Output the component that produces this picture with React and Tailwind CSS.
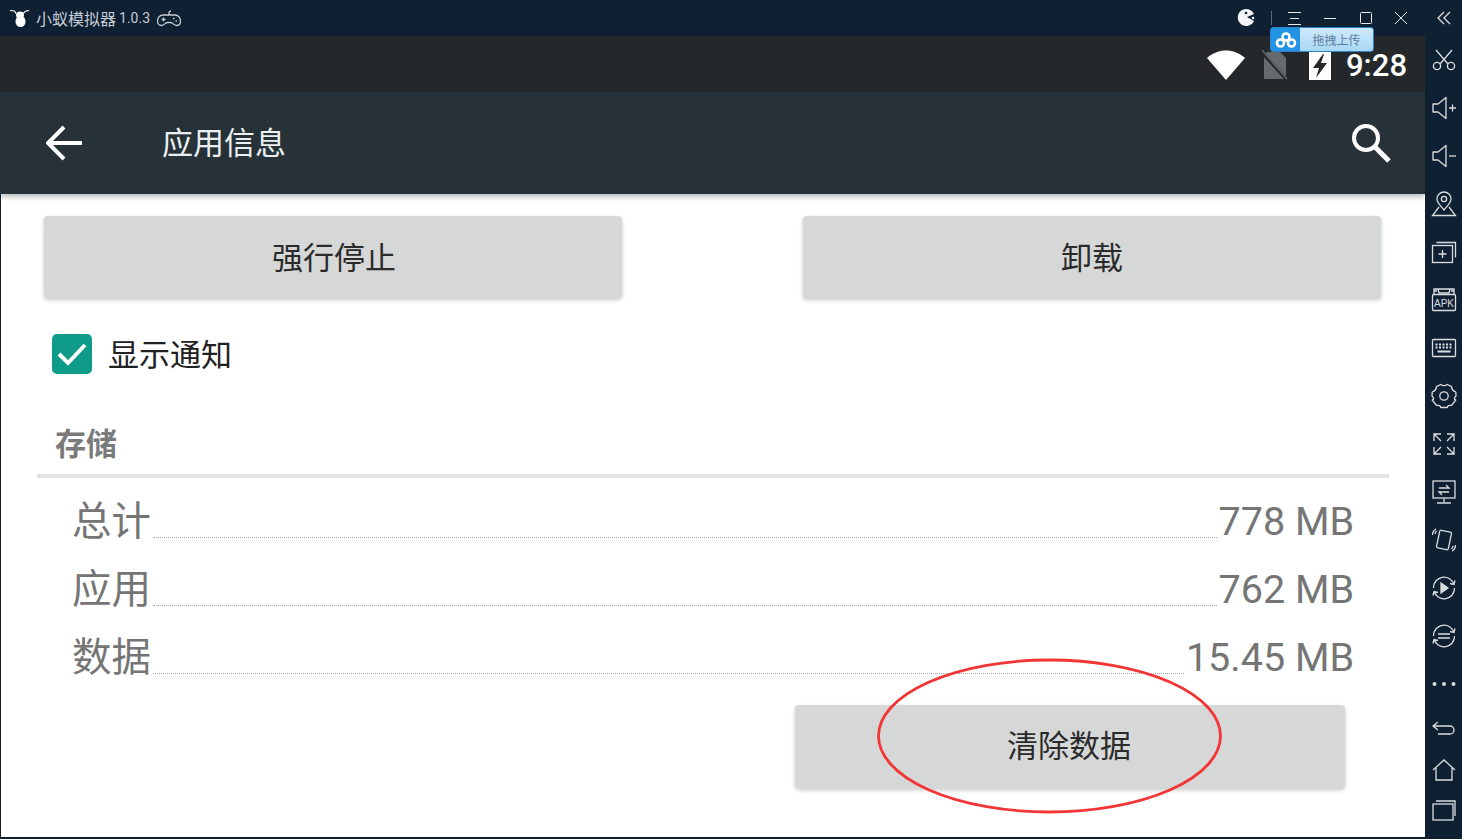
import React from "react";

const S = ({ w = 26, h = 26, vb = "0 0 26 26", children, className = "" }) => (
  <svg width={w} height={h} viewBox={vb} fill="none" stroke="#d9dde0" strokeWidth="1.3" className={className}>
    {children}
  </svg>
);

const gear =
  "M9.700 1.500 Q13 3.800 16.300 1.500 L20.500 3.600 Q20.800 7.500 24.800 9 L25 13 Q22 15.500 24.800 17 L20.500 22.400 Q16.500 21.800 16.300 24.500 L9.700 24.500 Q9.500 21.800 5.500 22.400 L1.200 17 Q4 15.500 1 13 L1.200 9 Q5.200 7.500 5.500 3.600 Z";

const sideIcons = [
  { h: "h-9", el: <S w={16} h={16} vb="0 0 16 16"><path d="M8 2 2 8l6 6M14 2 8 8l6 6" /></S> },
  { h: "h-12", el: <S><path d="M5 3 17 17M21 3 9 17" /><circle cx="6" cy="19" r="3.600" /><circle cx="20" cy="19" r="3.600" /></S> },
  { h: "h-12", el: <S><path d="M2 9h5l8-6.500v21l-8-6.500H2z" strokeLinejoin="round" /><path d="M18 13h7M21.500 9.500v7" /></S> },
  { h: "h-12", el: <S><path d="M2 9h5l8-6.500v21l-8-6.500H2z" strokeLinejoin="round" /><path d="M18 13h7" /></S> },
  { h: "h-12", el: <S><path d="M13 19c-3-4-7-7-7-11a7 7 0 0 1 14 0c0 4-4 7-7 11z" /><circle cx="13" cy="8" r="2.600" /><path d="M8 16 1.500 24.500h23L18 16" /></S> },
  { h: "h-12", el: <S><rect x="1.500" y="6.500" width="20" height="17" /><path d="M5.500 3.500h19v15M7.500 15h8M11.500 11v8" /></S> },
  { h: "h-12", el: <svg width="26" height="26" viewBox="0 0 26 26" fill="none" stroke="#d9dde0" strokeWidth="1.300"><path d="M3 8V2h20v6M3 4h3M20 4h3M7 2l1 4h10l1-4" /><rect x="1.500" y="7.500" width="23" height="16" rx="1" /><text x="13" y="20" fontSize="10" fill="#d9dde0" stroke="none" textAnchor="middle" fontFamily="Liberation Sans">APK</text></svg> },
  { h: "h-12", el: <S><rect x="1.500" y="4.500" width="23" height="17" rx="1" /><path d="M4.500 9.500h17M4.500 12.500h17" strokeWidth="2" strokeDasharray="2 1.500" /><path d="M6.500 16.500h13" strokeWidth="2" /></S> },
  { h: "h-12", el: <S><path d={gear} strokeLinejoin="round" /><circle cx="13" cy="13" r="4.200" /></S> },
  { h: "h-12", el: <S><path d="M3 3l7 7M3 10V3h7M23 3l-7 7M23 10V3h-7M3 23l7-7M3 16v7h7M23 23l-7-7M23 16v7h-7" /></S> },
  { h: "h-12", el: <S><rect x="2" y="2" width="22" height="17" /><path d="M13 19v4M6 24h14M8 9h10l-3-3M18 13H8l3 3" /></S> },
  { h: "h-12", el: <S><rect x="7" y="4" width="12" height="18" rx="1.500" transform="rotate(12 13 13)" /><path d="M1.500 8c0-3 1.500-5 3.500-6M4 7c0-1 .5-2 1.500-3M24.500 18c0 3-1.500 5-3.500 6M22 19c0 1-.5 2-1.500 3" /></S> },
  { h: "h-12", el: <S><path d="M2.500 13A10.500 10.500 0 0 1 23 9.500M23.500 13A10.500 10.500 0 0 1 3 16.500M24 5.500l-1 4-4-1M2 20.500l1-4 4 1" /><path d="M10 8l7 5-7 5z" fill="#d9dde0" /></S> },
  { h: "h-12", el: <S><path d="M2.500 13A10.500 10.500 0 0 1 23 9.500M23.500 13A10.500 10.500 0 0 1 3 16.500M24 5.500l-1 4-4-1M2 20.500l1-4 4 1" /><path d="M7 11h12M7 15h12" /></S> },
  { h: "h-12", el: <S><circle cx="3.500" cy="13" r="2" fill="#d9dde0" stroke="none" /><circle cx="13" cy="13" r="2" fill="#d9dde0" stroke="none" /><circle cx="22.500" cy="13" r="2" fill="#d9dde0" stroke="none" /></S> },
  { h: "h-[42px]", el: <S><path d="M7 6l-5 4 5 4M2 10h17a4 4 0 0 1 0 8H7" /></S> },
  { h: "h-10", el: <S><path d="M2 13 13 3l11 10M5 11v12h16V11" /></S> },
  { h: "h-10", el: <S><rect x="2" y="7" width="20" height="16" /><path d="M5 4h19v15" /></S> },
];

const Row = ({ label, value }) => (
  <div className="flex items-end h-[68px] pl-[71px] pr-[71px] text-[39.500px] leading-[50px] text-[#757575]">
    <span>{label}</span>
    <span className="flex-1 border-b border-dotted border-[#a8a8a8] mb-[9px] mx-[2px]" />
    <span>{value}</span>
  </div>
);

const GreyBtn = ({ children, className = "" }) => (
  <div className={`flex items-center justify-center rounded-[4px] bg-[#d6d7d7] shadow-[0_2px_4px_rgba(0,0,0,0.22)] text-[31px] text-[#2b2b2b] ${className}`}>
    {children}
  </div>
);

export default function App() {
  return (
    <div className="relative w-[1462px] h-[839px] overflow-hidden flex bg-[#102033] font-['Roboto','Noto_Sans_CJK_SC',sans-serif] pb-[2px] pl-px">
      <div className="w-[1424px] flex flex-col">
        {/* window title */}
        <div className="h-9 flex items-center text-[#c5ccd3] -ml-px">
          <svg width="20" height="20" viewBox="0 0 20 20" className="ml-[10px]">
            <path d="M0 2.500c4 0 5 .5 6 3M19 2.500c-3 0-4 .5-6 3" stroke="#fff" strokeWidth="1.200" fill="none" />
            <ellipse cx="10" cy="7" rx="4" ry="3.500" fill="#fff" />
            <ellipse cx="10.500" cy="13.500" rx="5" ry="5.500" fill="#fff" />
          </svg>
          <span className="ml-[6px] text-[16px] leading-none font-['Noto_Sans_CJK_SC',sans-serif]">小蚁模拟器</span>
          <span className="ml-[3px] text-[14px] leading-none">1.0.3</span>
          <svg width="24" height="17" viewBox="0 0 24 17" fill="none" stroke="#c5ccd3" strokeWidth="1.300" className="ml-[7px]">
            <path d="M6 5h12c3.500 0 5.500 3 5.500 6 0 2.500-1.500 4.500-4 4.500-3 0-3.500-3-6-3h-3c-2.500 0-3 3-6 3-2.500 0-4-2-4-4.500 0-3 2-6 5.500-6z" />
            <path d="M12 5V3c0-1.500 1-2 2-2M4.500 9.500h4M6.500 7.500v4M16 8.500h1.500M18.500 11H20" />
          </svg>
          <div className="ml-auto flex items-center">
            <svg width="20" height="20" viewBox="0 0 20 20">
              <path d="M18 13a8.500 8.500 0 1 1 0-7l-7 3z" fill="#f2f4f6" />
              <circle cx="17" cy="10" r="1.300" fill="#f2f4f6" />
              <circle cx="10" cy="5" r="1.300" fill="#102033" />
            </svg>
            <span className="ml-[15px] w-px h-[14px] bg-[#5b6b7b]" />
            <svg width="13" height="14" viewBox="0 0 13 14" stroke="#e6e9ec" className="ml-4">
              <path d="M0 1.500h13M2 7.500h9M0 13.500h13" />
            </svg>
            <svg width="12" height="14" viewBox="0 0 12 14" stroke="#e6e9ec" className="ml-[23px]">
              <path d="M0 7.500h12" />
            </svg>
            <svg width="12" height="12" viewBox="0 0 12 12" fill="none" stroke="#e6e9ec" className="ml-[24px]">
              <rect x="0.500" y="0.500" width="11" height="11" rx="1" />
            </svg>
            <svg width="14" height="14" viewBox="0 0 14 14" stroke="#e6e9ec" className="ml-[22px] mr-[17px]">
              <path d="M1 1l12 12M13 1 1 13" />
            </svg>
          </div>
        </div>

        {/* android status */}
        <div className="h-14 bg-[#25282a] flex items-center justify-end pr-[18px] -ml-px">
          <svg width="38" height="32" viewBox="0 0 38 32" className="mb-[1px]">
            <path d="M0 10C11 0 27 0 38 10L19 32z" fill="#fff" />
          </svg>
          <svg width="28" height="31" viewBox="0 0 28 31" className="ml-[15px] mt-[3px]">
            <path d="M7 2h13l6 6v20a1 1 0 0 1-1 1H5a1 1 0 0 1-1-1V5z" fill="#666a6c" />
            <path d="M1 1 27 30" stroke="#25282a" strokeWidth="3.500" />
            <path d="M2 0 27 29" stroke="#666a6c" strokeWidth="1.500" />
          </svg>
          <svg width="22" height="28" viewBox="0 0 22 28" className="ml-[21px] mt-[3px]">
            <path d="M0 0h22v28H0z" fill="#fff" />
            <path d="M14 2 4 16h6l-3 10 11-15h-6l3-9z" fill="#25282a" />
          </svg>
          <span className="ml-[15px] text-[31px] leading-none font-medium text-white pt-[2px]">9:28</span>
        </div>

        {/* app bar */}
        <div className="relative z-10 h-[102px] bg-[#263238] shadow-[0_3px_5px_rgba(0,0,0,0.25)] flex items-center -ml-px pl-[46px] pr-[34px]">
          <svg width="36" height="36" viewBox="0 0 36 36" fill="none" stroke="#fff" strokeWidth="4">
            <path d="M18 2 2 18l16 16M2 18h34" />
          </svg>
          <span className="ml-[80px] pt-[2px] text-[31px] text-[#eceff1]">应用信息</span>
          <svg width="40" height="40" viewBox="0 0 40 40" fill="none" stroke="#fff" strokeWidth="4" className="ml-auto">
            <circle cx="15" cy="15" r="12" />
            <path d="M24 24l14 14" strokeWidth="5" />
          </svg>
        </div>

        {/* content */}
        <div className="flex-1 bg-white flex flex-col">
          <div className="flex justify-between pl-[43px] pr-[44px] pt-[22px]">
            <GreyBtn className="w-[578px] h-[82px] pt-[4px] pl-[2px]">强行停止</GreyBtn>
            <GreyBtn className="w-[578px] h-[82px] pt-[4px]">卸载</GreyBtn>
          </div>
          <div className="flex items-center pl-[51px] mt-[36px] h-10">
            <div className="w-10 h-10 rounded-[5px] bg-[#0e9b8a] flex items-center justify-center">
              <svg width="32" height="26" viewBox="0 0 32 26" fill="none" stroke="#fff" strokeWidth="4">
                <path d="M3 13l9 9L29 4" />
              </svg>
            </div>
            <span className="ml-[16px] pt-[5px] text-[31px] text-[#212121]">显示通知</span>
          </div>
          <div className="pl-[54px] mt-[48px] pt-[1px] h-[44px] text-[31px] leading-[44px] font-bold text-[#7a7a7a]">存储</div>
          <div className="ml-[36px] mr-[36px] mt-[8px] h-1 bg-[#e2e4e4]" />
          <div className="mt-[1px]">
            <Row label="总计" value="778 MB" />
            <Row label="应用" value="762 MB" />
            <Row label="数据" value="15.45 MB" />
          </div>
          <div className="flex justify-end pr-[80px] mt-[22px]">
            <GreyBtn className="w-[550px] h-[83px] pt-[2px] pr-[2px]">清除数据</GreyBtn>
          </div>
        </div>
      </div>

      {/* emulator sidebar */}
      <div className="w-[37px] flex flex-col items-center">
        {sideIcons.map((ic, i) => (
          <div key={i} className={`${ic.h} flex items-center justify-center`}>
            {ic.el}
          </div>
        ))}
      </div>

      {/* baidu upload widget floating over the window */}
      <div className="absolute left-[1270px] top-[27px] w-[104px] h-[25px] flex rounded-[3px] border border-[#2a86c8] overflow-hidden">
        <div className="w-[29px] bg-[#2394e4] flex items-center justify-center">
          <svg width="22" height="16" viewBox="0 0 22 16" fill="none" stroke="#fff" strokeWidth="2.600">
            <circle cx="11" cy="5" r="3.500" />
            <circle cx="5.500" cy="11" r="3.500" />
            <circle cx="16.500" cy="11" r="3.500" />
          </svg>
        </div>
        <div className="flex-1 pt-[1px] bg-gradient-to-b from-[#cfe9fa] to-[#a9d8f6] flex items-center justify-center text-[12px] text-[#5c7f9c] font-['Noto_Sans_CJK_SC',sans-serif]">
          拖拽上传
        </div>
      </div>

      {/* hand-drawn red annotation */}
      <svg width="350" height="160" viewBox="0 0 350 160" fill="none" className="absolute left-[875px] top-[656px]">
        <ellipse cx="174.500" cy="80" rx="171" ry="76" stroke="#f33535" strokeWidth="2.800" />
      </svg>
    </div>
  );
}
